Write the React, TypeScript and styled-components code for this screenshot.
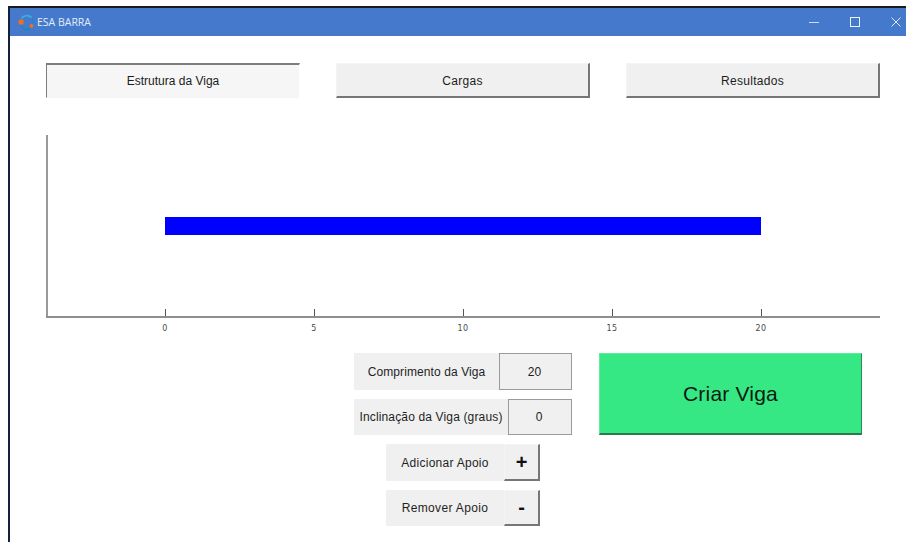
import React from "react";
import styled, { createGlobalStyle } from "styled-components";

const Global = createGlobalStyle`
  html, body { margin: 0; padding: 0; background: #fff; }
  body { width: 906px; height: 542px; overflow: hidden; font-family: "Liberation Sans", Arial, sans-serif; color: #1c1c1c; }
`;

const Desktop = styled.div`
  width: 906px;
  height: 542px;
  padding: 6px 0 0 8px;
  box-sizing: border-box;
  overflow: hidden;
`;

const Frame = styled.div`
  width: 898px;
  height: 536px;
  box-sizing: border-box;
  border-top: 2px solid #1a1a1a;
  border-left: 2px solid #14213a;
  display: flex;
  flex-direction: column;
`;

const TitleBar = styled.header`
  height: 28px;
  flex: none;
  background: #4479cc;
  display: flex;
  align-items: center;
  padding-left: 8px;
  color: #e4ecf8;
`;

const TitleText = styled.span`
  font-family: "Open Sans", sans-serif;
  font-size: 10.5px;
  margin-left: 2px;
  flex: 1;
`;

const WindowControl = styled.span<{ $width: number }>`
  width: ${(p) => p.$width}px;
  height: 28px;
  flex: none;
  display: flex;
  align-items: center;
`;

const Body = styled.main`
  flex: 1;
  padding: 27px 0 0 36px;
  display: flex;
  flex-direction: column;
`;

const Tabs = styled.nav`
  width: 834px;
  display: flex;
  justify-content: space-between;
`;

const Tab = styled.button<{ $active?: boolean; $spacing?: number }>`
  width: 254px;
  height: 35px;
  box-sizing: border-box;
  padding: ${(p) => (p.$active ? "0" : "2px 0 0")};
  font: 12px "Liberation Sans", Arial, sans-serif;
  letter-spacing: ${(p) => p.$spacing ?? 0}px;
  color: #1c1c1c;
  background: ${(p) => (p.$active ? "#f6f6f6" : "#f0f0f0")};
  border-style: solid;
  border-color: ${(p) => (p.$active ? "#7d7d7d #fff #f6f6f6 #7d7d7d" : "#f4f4f4 #767676 #767676 #f4f4f4")};
  border-width: ${(p) => (p.$active ? "2px 1px 1px 1px" : "1px 2px 2px 1px")};
`;

const ChartWrap = styled.section`
  margin-top: 37px;
  width: 836px;
  height: 218px;
`;

const Controls = styled.section`
  display: flex;
  padding-left: 308px;
  gap: 27px;
  align-items: flex-start;
`;

const Form = styled.div`
  width: 218px;
  display: flex;
  flex-direction: column;
  align-items: center;
  gap: 9px;
`;

const FormRow = styled.div`
  display: flex;
  height: 37px;
  align-self: stretch;
  justify-content: center;
  &:nth-child(2) { height: 36px; }
  &:nth-child(4) { height: 36px; margin-top: -0.5px; }
`;

const Label = styled.span<{ $width: number; $spacing: number }>`
  width: ${(p) => p.$width}px;
  background: #f0f0f0;
  display: flex;
  align-items: center;
  justify-content: center;
  font-size: 12px;
  letter-spacing: ${(p) => p.$spacing}px;
  white-space: nowrap;
  color: #1f1f1f;
`;

const Field = styled.div<{ $width: number }>`
  width: ${(p) => p.$width}px;
  box-sizing: border-box;
  padding-right: 2px;
  background: #f0f0f0;
  border: 1px solid #9a9a9a;
  display: flex;
  align-items: center;
  justify-content: center;
  font-size: 12px;
`;

const StepButton = styled.button`
  width: 36px;
  box-sizing: border-box;
  padding: 0;
  background: #f0f0f0;
  border-style: solid;
  border-width: 1px 2px 2px 1px;
  border-color: #f4f4f4 #767676 #767676 #f4f4f4;
  font: bold 20px "Liberation Sans", Arial, sans-serif;
  color: #111;
  line-height: 1;
`;

const CreateButton = styled.button`
  width: 263px;
  height: 82px;
  box-sizing: border-box;
  padding: 1px 0 0;
  background: #36e884;
  border-style: solid;
  border-width: 1px 1.5px 2px 1px;
  border-color: #5cec9c #2e8a58 #2a7a4e #5cec9c;
  font: 21px "Liberation Sans", Arial, sans-serif;
  letter-spacing: 0.2px;
  color: #0c1a12;
`;

const ticks = [0, 5, 10, 15, 20];
const tickX = (v: number) => 119.5 + v * 29.8;

function BeamChart() {
  return (
    <svg width="836" height="218" viewBox="0 0 836 218">
      <rect x="0" y="0" width="2" height="182" fill="#999" />
      <rect x="0" y="181" width="834" height="2" fill="#8e8e8e" />
      <rect x="119" y="82" width="596" height="18" fill="#0000ff" />
      {ticks.map((t) => (
        <g key={t}>
          <line x1={tickX(t)} x2={tickX(t)} y1="174" y2="181" stroke="#555" strokeWidth="1" />
          <text x={tickX(t) - 0.5} y="196" textAnchor="middle" fontSize="8" letterSpacing="0.4" fontFamily="'DejaVu Sans', sans-serif" fill="#4a4a4a">
            {t}
          </text>
        </g>
      ))}
    </svg>
  );
}

function AppIcon() {
  return (
    <svg width="17" height="17" viewBox="0 0 17 17" fill="none">
      <path d="M3.4 4.6A6.6 6.6 0 0 1 13.6 3.6" stroke="#35b0e0" strokeWidth="1.8" />
      <path d="M3 11.5A6.6 6.6 0 0 0 12.5 14.6" stroke="#1f86bd" strokeWidth="1.8" />
      <path d="M14.6 5A6.6 6.6 0 0 1 15.4 8.6" stroke="#1f86bd" strokeWidth="1.4" />
      <rect x="0.6" y="5.6" width="5" height="5" rx="1" fill="#ee6f24" />
      <circle cx="13.4" cy="12" r="1.9" fill="#ee6f24" />
    </svg>
  );
}

export default function App() {
  return (
    <Desktop>
      <Global />
      <Frame>
        <TitleBar>
          <AppIcon />
          <TitleText>ESA BARRA</TitleText>
          <WindowControl $width={41}>
            <svg width="10" height="10" viewBox="0 0 10 10"><path d="M0 5.5H10" stroke="#cfdcf2" strokeWidth="1" /></svg>
          </WindowControl>
          <WindowControl $width={41}>
            <svg width="10" height="10" viewBox="0 0 10 10" fill="none"><rect x="0.5" y="0.5" width="9" height="9" stroke="#eef3fb" /></svg>
          </WindowControl>
          <WindowControl $width={15}>
            <svg width="10" height="10" viewBox="0 0 10 10" fill="none"><path d="M0.5 0.5L9.5 9.5M9.5 0.5L0.5 9.5" stroke="#dfe8f7" /></svg>
          </WindowControl>
        </TitleBar>
        <Body>
          <Tabs>
            <Tab $active>Estrutura da Viga</Tab>
            <Tab $spacing={0.3}>Cargas</Tab>
            <Tab $spacing={0.3}>Resultados</Tab>
          </Tabs>
          <ChartWrap>
            <BeamChart />
          </ChartWrap>
          <Controls>
            <Form>
              <FormRow>
                <Label $width={145} $spacing={0.1}>Comprimento da Viga</Label>
                <Field $width={73}>20</Field>
              </FormRow>
              <FormRow>
                <Label $width={154} $spacing={0.15}>Inclinação da Viga (graus)</Label>
                <Field $width={64}>0</Field>
              </FormRow>
              <FormRow>
                <Label $width={118} $spacing={0.27}>Adicionar Apoio</Label>
                <StepButton>+</StepButton>
              </FormRow>
              <FormRow>
                <Label $width={118} $spacing={0.35}>Remover Apoio</Label>
                <StepButton>-</StepButton>
              </FormRow>
            </Form>
            <CreateButton>Criar Viga</CreateButton>
          </Controls>
        </Body>
      </Frame>
    </Desktop>
  );
}
